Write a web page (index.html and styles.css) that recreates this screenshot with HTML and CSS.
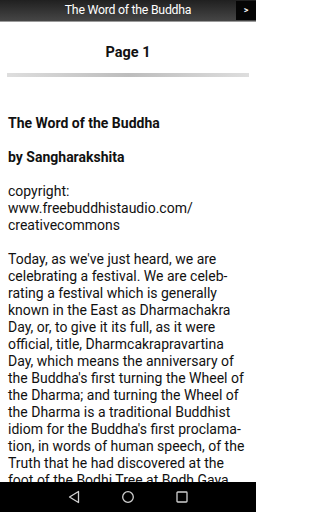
FILE: index.html
```html
<!DOCTYPE html>
<html>
<head>
<meta charset="utf-8">
<link rel="stylesheet" href="styles.css">
</head>
<body>
<div class="screen">
  <header class="topbar">
    <div class="topbar-title">The Word of the Buddha</div>
    <div class="next-btn">&gt;</div>
  </header>
  <main class="content">
    <h1 class="page-title">Page 1</h1>
    <div class="divider"></div>
    <p class="bold">The Word of the Buddha</p>
    <p class="bold">by Sangharakshita</p>
    <p>copyright:<br>www.freebuddhistaudio.com/<br>creativecommons</p>
    <p>Today, as we've just heard, we are celebrating a festival. We are celeb&shy;rating a festival which is generally known in the East as Dharmachakra Day, or, to give it its full, as it were official, title, Dharmcakrapravartina Day, which means the anniversary of the Buddha's first turning the Wheel of the Dharma; and turning the Wheel of the Dharma is a traditional Buddhist idiom for the Buddha's first proclama&shy;tion, in words of human speech, of the Truth that he had discovered at the foot of the Bodhi Tree at Bodh Gaya and which he had been contemplating</p>
  </main>
  <nav class="navbar">
    <svg class="nav-icon" width="14" height="14" viewBox="0 0 14 14"><path d="M11.5 1.5 L2.5 7 L11.5 12.5 Z" fill="none" stroke="#d0d0d0" stroke-width="1.3" stroke-linejoin="round"/></svg>
    <svg class="nav-icon" width="14" height="14" viewBox="0 0 14 14"><circle cx="7" cy="7" r="5.3" fill="none" stroke="#d0d0d0" stroke-width="1.3"/></svg>
    <svg class="nav-icon" width="14" height="14" viewBox="0 0 14 14"><rect x="2" y="2" width="10" height="10" rx="0.8" fill="none" stroke="#d0d0d0" stroke-width="1.3"/></svg>
  </nav>
</div>
</body>
</html>
```
FILE: styles.css
```css
* { box-sizing: border-box; }
html, body { margin: 0; padding: 0; }
body {
  width: 256px;
  height: 512px;
  overflow: hidden;
  background: #fff;
  font-family: Roboto, "Noto Sans", sans-serif;
  color: #111;
}
.screen {
  width: 256px;
  height: 512px;
  display: flex;
  flex-direction: column;
}
.topbar {
  height: 22px;
  flex: none;
  display: flex;
  align-items: stretch;
  background: linear-gradient(#202020, #464646);
  border-bottom: 1px solid #9a9a9a;
}
.topbar-title {
  flex: 1;
  color: #fff;
  font-size: 12.3px;
  letter-spacing: -0.25px;
  line-height: 21px;
  text-align: center;
  padding-left: 20px;
}
.next-btn {
  width: 20px;
  margin: 1px 0 1px 0;
  background: #050505;
  color: #fff;
  font-size: 9px;
  font-weight: bold;
  line-height: 19px;
  text-align: center;
}
.content {
  flex: 1;
  overflow: hidden;
  padding: 0 8px;
}
.page-title {
  margin: 0;
  padding-top: 21px;
  font-size: 14.5px;
  font-weight: bold;
  line-height: 20px;
  text-align: center;
}
.divider {
  height: 4px;
  margin: 10px -1px 0;
  background: linear-gradient(to right, #dedede, #bdbdbd 50%, #dedede);
}
.content p {
  margin: 0 0 17px;
  font-size: 14px;
  line-height: 17px;
  hyphens: manual;
}
.content p.bold {
  font-weight: bold;
}
.content .divider + p { margin-top: 38px; }
.navbar {
  height: 30px;
  flex: none;
  background: #000;
  display: flex;
  justify-content: center;
  align-items: center;
  gap: 40px;
}
.nav-icon { display: block; }
```
